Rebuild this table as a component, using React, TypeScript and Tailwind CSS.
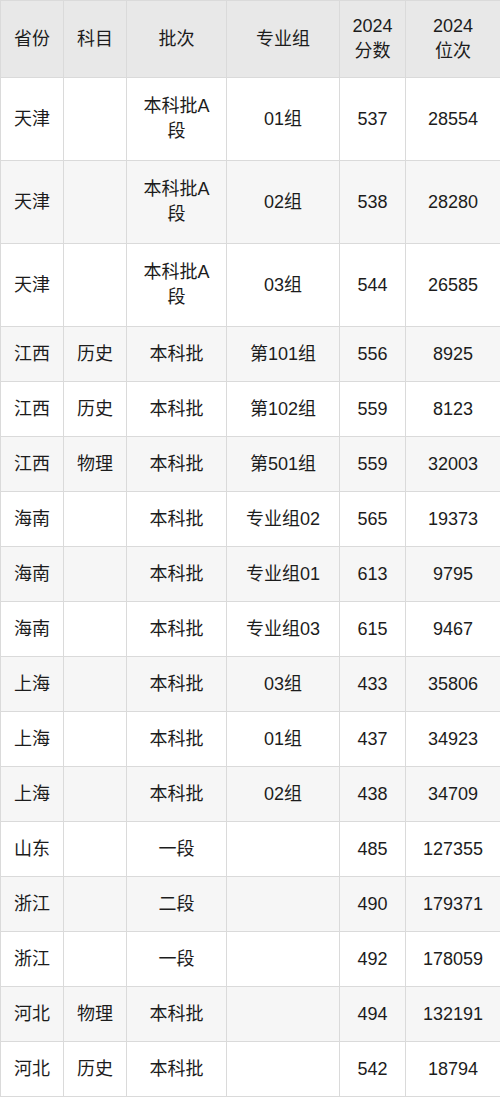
import React from 'react';

type Row = [string, string, string, string, string, string];

const rows: Row[] = [
  ['天津', '', '本科批A\n段', '01组', '537', '28554'],
  ['天津', '', '本科批A\n段', '02组', '538', '28280'],
  ['天津', '', '本科批A\n段', '03组', '544', '26585'],
  ['江西', '历史', '本科批', '第101组', '556', '8925'],
  ['江西', '历史', '本科批', '第102组', '559', '8123'],
  ['江西', '物理', '本科批', '第501组', '559', '32003'],
  ['海南', '', '本科批', '专业组02', '565', '19373'],
  ['海南', '', '本科批', '专业组01', '613', '9795'],
  ['海南', '', '本科批', '专业组03', '615', '9467'],
  ['上海', '', '本科批', '03组', '433', '35806'],
  ['上海', '', '本科批', '01组', '437', '34923'],
  ['上海', '', '本科批', '02组', '438', '34709'],
  ['山东', '', '一段', '', '485', '127355'],
  ['浙江', '', '二段', '', '490', '179371'],
  ['浙江', '', '一段', '', '492', '178059'],
  ['河北', '物理', '本科批', '', '494', '132191'],
  ['河北', '历史', '本科批', '', '542', '18794'],
];

const headers = ['省份', '科目', '批次', '专业组', '2024\n分数', '2024\n位次'];

const Cell: React.FC<{ text: string; head?: boolean }> = ({ text, head }) => {
  const parts = text.split('\n');
  const Tag = head ? 'th' : 'td';
  return (
    <Tag className="border border-[#dadada] px-1 text-center align-middle font-normal">
      {parts.map((p, i) => (
        <React.Fragment key={i}>
          {i > 0 && <br />}
          {p}
        </React.Fragment>
      ))}
    </Tag>
  );
};

const App: React.FC = () => {
  return (
    <div className="w-[500px] bg-white">
      <table
        className="w-[500px] table-fixed border-collapse text-[18px] leading-[25px] text-[#1c1c1c]"
        style={{ fontFamily: '"Liberation Sans", "Noto Sans CJK SC", sans-serif' }}
      >
        <colgroup>
          <col className="w-[63px]" />
          <col className="w-[63px]" />
          <col className="w-[100px]" />
          <col className="w-[113px]" />
          <col className="w-[66px]" />
          <col className="w-[95px]" />
        </colgroup>
        <thead>
          <tr className="h-[77px] bg-[#e8e8e8]">
            {headers.map((h) => (
              <Cell key={h} text={h} head />
            ))}
          </tr>
        </thead>
        <tbody>
          {rows.map((r, i) => (
            <tr
              key={i}
              className={`${i < 3 ? 'h-[83px]' : 'h-[55px]'} ${i % 2 === 1 ? 'bg-[#f6f6f6]' : 'bg-white'}`}
            >
              {r.map((c, j) => (
                <Cell key={j} text={c} />
              ))}
            </tr>
          ))}
        </tbody>
      </table>
    </div>
  );
};

export default App;
